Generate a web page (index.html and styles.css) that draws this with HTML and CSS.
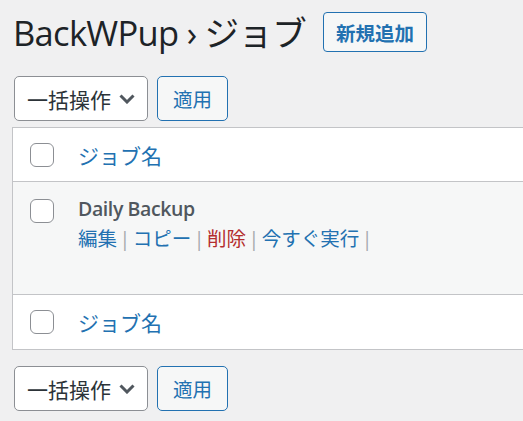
FILE: index.html
```html
<!DOCTYPE html>
<html lang="ja">
<head>
    <meta charset="UTF-8">
    <meta name="viewport" content="width=device-width, initial-scale=1.0">
    <title>BackWPup ジョブ</title>
    <link rel="stylesheet" href="styles.css">
</head>
<body>
    <div class="wrap">
        <div class="heading">
            <h1>BackWPup › ジョブ</h1>
            <a href="#" class="page-title-action">新規追加</a>
        </div>

        <div class="tablenav">
            <div class="bulk-select">
                <span>一括操作</span>
                <svg class="chevron" width="16" height="10" viewBox="0 0 16 10">
                    <path d="M1.5 1.5 L8 8 L14.5 1.5" fill="none" stroke="#50575e" stroke-width="3"/>
                </svg>
            </div>
            <button type="button" class="button">適用</button>
        </div>

        <table class="jobs">
            <thead>
                <tr>
                    <td class="check-column"><span class="checkbox"></span></td>
                    <th><a href="#">ジョブ名</a></th>
                </tr>
            </thead>
            <tbody>
                <tr class="alternate">
                    <td class="check-column"><span class="checkbox"></span></td>
                    <td class="column-primary">
                        <strong>Daily Backup</strong>
                        <div class="row-actions"><a href="#">編集</a><span class="sep">|</span><a href="#">コピー</a><span class="sep">|</span><a href="#" class="delete">削除</a><span class="sep">|</span><a href="#">今すぐ実行</a><span class="sep">|</span></div>
                    </td>
                </tr>
            </tbody>
            <tfoot>
                <tr>
                    <td class="check-column"><span class="checkbox"></span></td>
                    <th><a href="#">ジョブ名</a></th>
                </tr>
            </tfoot>
        </table>

        <div class="tablenav bottom">
            <div class="bulk-select">
                <span>一括操作</span>
                <svg class="chevron" width="16" height="10" viewBox="0 0 16 10">
                    <path d="M1.5 1.5 L8 8 L14.5 1.5" fill="none" stroke="#50575e" stroke-width="3"/>
                </svg>
            </div>
            <button type="button" class="button">適用</button>
        </div>
    </div>
</body>
</html>
```

FILE: styles.css
```css
html {
    overflow: hidden;
}

body {
    margin: 0;
    background-color: #f0f0f1;
    color: #3c434a;
    font-family: "Open Sans", "Noto Sans CJK JP", sans-serif;
}

a {
    color: #2271b1;
    text-decoration: none;
}

.wrap {
    padding-left: 12px;
}

.heading {
    display: flex;
    align-items: center;
    height: 64px;
}

h1 {
    margin: 0 0 0 1px;
    font-size: 34.5px;
    font-weight: 400;
    letter-spacing: -0.7px;
    color: #1d2327;
    line-height: 1;
    position: relative;
    top: 1px;
}

.page-title-action {
    margin-left: 17px;
    height: 38px;
    width: 102px;
    display: flex;
    align-items: center;
    justify-content: center;
    border: 1px solid #2271b1;
    border-radius: 4px;
    background-color: #f6f7f7;
    font-size: 19.5px;
    font-weight: 700;
}

.tablenav {
    display: flex;
    gap: 9px;
    padding: 12px 0 6px 2px;
}

.tablenav.bottom {
    padding-top: 16px;
}

.bulk-select {
    box-sizing: border-box;
    width: 134px;
    height: 45px;
    display: flex;
    align-items: center;
    justify-content: space-between;
    padding: 0 12px 0 12px;
    background-color: #fff;
    border: 1px solid #8c8f94;
    border-radius: 5px;
    font-size: 21px;
    color: #2c3338;
}

.chevron {
    margin-top: 1px;
}

.button {
    box-sizing: border-box;
    width: 71px;
    height: 45px;
    border: 1px solid #2271b1;
    border-radius: 5px;
    background-color: #f6f7f7;
    color: #2271b1;
    font-family: inherit;
    font-size: 19.5px;
    padding: 0;
}

.jobs {
    width: 600px;
    border-collapse: collapse;
    background-color: #fff;
    border: 1px solid #c3c4c7;
    border-right: 0;
}

.jobs thead tr {
    height: 54px;
    border-bottom: 1px solid #c3c4c7;
}

.jobs tfoot tr {
    height: 55px;
    border-top: 1px solid #c3c4c7;
}

.jobs th {
    text-align: left;
    font-weight: 400;
    font-size: 21px;
    padding: 0;
    vertical-align: middle;
}

.check-column {
    width: 48px;
    padding: 0 0 0 17px;
    vertical-align: middle;
}

.checkbox {
    display: block;
    box-sizing: border-box;
    width: 24px;
    height: 24px;
    border: 1px solid #8c8f94;
    border-radius: 6px;
    background-color: #fff;
}

.alternate {
    background-color: #f6f7f7;
    height: 113px;
}

.alternate .check-column {
    vertical-align: top;
    padding-top: 17px;
}

.column-primary {
    vertical-align: top;
    padding: 14px 0 0 0;
}

.column-primary strong {
    display: block;
    font-size: 19.5px;
    font-weight: 600;
    letter-spacing: -0.4px;
    color: #50575e;
    line-height: 1.35;
}

.row-actions {
    font-size: 19.5px;
    margin-top: 3px;
    line-height: 1.4;
}

.row-actions .sep {
    color: #a7aaad;
    margin: 0 2.5px;
}

.row-actions .delete {
    color: #b32d2e;
}
```
